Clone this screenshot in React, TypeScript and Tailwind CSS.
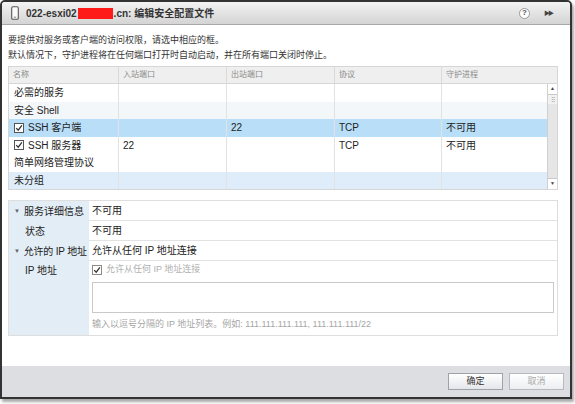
import React from "react";

const FONT = {
  fontFamily: '"Liberation Sans", "Noto Sans CJK SC", sans-serif',
};

type Row = {
  name: string;
  checkbox?: boolean;
  inbound?: string;
  outbound?: string;
  protocol?: string;
  daemon?: string;
  bg: string;
};

const rows: Row[] = [
  { name: "必需的服务", bg: "bg-white" },
  { name: "安全 Shell", bg: "bg-[#f4f7fa]" },
  {
    name: "SSH 客户端",
    checkbox: true,
    outbound: "22",
    protocol: "TCP",
    daemon: "不可用",
    bg: "bg-[#b9def7]",
  },
  {
    name: "SSH 服务器",
    checkbox: true,
    inbound: "22",
    protocol: "TCP",
    daemon: "不可用",
    bg: "bg-white",
  },
  { name: "简单网络管理协议", bg: "bg-white" },
  { name: "未分组", bg: "bg-[#deedf9]" },
];

function CheckBox({ faded }: { faded?: boolean }) {
  return (
    <span
      className={`inline-flex h-[10px] w-[10px] shrink-0 items-center justify-center border bg-white ${
        faded ? "border-[#8a8a8a]" : "border-[#555]"
      }`}
    >
      <svg viewBox="0 0 10 10" className="h-[8px] w-[8px]">
        <path
          d="M1.5 5.2 L4 7.8 L8.6 1.8"
          fill="none"
          stroke="#333"
          strokeWidth="1.6"
        />
      </svg>
    </span>
  );
}

function Caret() {
  return <span className="mr-[4px] text-[6px] text-[#666]">▼</span>;
}

export default function App() {
  return (
    <div
      className="h-[404px] w-[575px] overflow-hidden bg-white text-[9px] text-[#222]"
      style={FONT}
    >
      <div className="flex h-[399px] w-[572px] flex-col overflow-hidden rounded-t-[5px] border-2 border-[#333] bg-white shadow-[2px_3px_3px_rgba(0,0,0,0.35)]">
        {/* title bar */}
        <div className="flex h-[23px] shrink-0 items-center border-b border-[#a8a8a8] bg-gradient-to-b from-[#f3f3f3] to-[#d4d4d4] pl-[9px] pr-[18px]">
          <svg viewBox="0 0 8 14" className="h-[14px] w-[8px]">
            <rect x="0.7" y="0.7" width="6.6" height="12.6" rx="1.3" fill="#fafafa" stroke="#555" strokeWidth="1.1" />
            <line x1="2.8" y1="11.2" x2="5.2" y2="11.2" stroke="#777" strokeWidth="0.9" />
          </svg>
          <span className="ml-[7px] flex items-center text-[10px] font-bold text-[#333]">
            022-esxi02
            <span className="mx-[1px] inline-block h-[11px] w-[35px] bg-[#ff1a1a]" />
            .cn: 编辑安全配置文件
          </span>
          <div className="ml-auto flex items-center gap-[14px]">
            <span className="flex h-[11px] w-[11px] items-center justify-center rounded-full border border-[#999] bg-white text-[8px] font-bold text-[#555]">
              ?
            </span>
            <span className="text-[6px] tracking-[-2px] text-[#444]">▶▶</span>
          </div>
        </div>

        {/* body */}
        <div className="flex flex-1 flex-col pl-[6px] pr-[12px] pt-[8px]">
          <p className="leading-[15px] text-[#333]">
            要提供对服务或客户端的访问权限，请选中相应的框。
          </p>
          <p className="leading-[15px] text-[#333]">
            默认情况下，守护进程将在任何端口打开时自动启动，并在所有端口关闭时停止。
          </p>

          {/* table */}
          <div className="mt-[3px] border border-[#d6d6d6]">
            <div className="grid h-[17px] grid-cols-[109px_108px_108px_107px_1fr] border-b border-[#d6d6d6] bg-[#efefef] text-[8px] text-[#8a8a8a]">
              {["名称", "入站端口", "出站端口", "协议", "守护进程"].map((h, i) => (
                <div
                  key={h}
                  className={`flex items-center pl-[4px] ${i > 0 ? "border-l border-[#dadada]" : ""}`}
                >
                  {h}
                </div>
              ))}
            </div>
            <div className="flex">
              <div className="flex-1">
                {rows.map((r) => (
                  <div
                    key={r.name}
                    className={`grid h-[17.5px] grid-cols-[109px_108px_108px_107px_1fr] text-[10px] ${r.bg}`}
                  >
                    <div className="flex items-center gap-[4px] pl-[5px]">
                      {r.checkbox ? <CheckBox /> : null}
                      {r.name}
                    </div>
                    <div className="flex items-center border-l border-[#e2e2e2] pl-[4px]">
                      {r.inbound}
                    </div>
                    <div className="flex items-center border-l border-[#e2e2e2] pl-[4px]">
                      {r.outbound}
                    </div>
                    <div className="flex items-center border-l border-[#e2e2e2] pl-[4px]">
                      {r.protocol}
                    </div>
                    <div className="flex items-center border-l border-[#e2e2e2] pl-[4px]">
                      {r.daemon}
                    </div>
                  </div>
                ))}
              </div>
              {/* scrollbar */}
              <div className="flex w-[10px] flex-col border-l border-[#d0d0d0] bg-[#e6e6e6]">
                <div className="flex h-[11px] items-center justify-center border-b border-[#c8c8c8] bg-white text-[5px] text-[#444]">
                  ▲
                </div>
                <div className="flex h-[9px] items-center justify-center bg-[#f2f2f2] text-[6px] leading-none text-[#888]">
                  ⠿
                </div>
                <div className="flex-1" />
                <div className="flex h-[11px] items-center justify-center border-t border-[#c8c8c8] bg-white text-[5px] text-[#444]">
                  ▼
                </div>
              </div>
            </div>
          </div>

          {/* details */}
          <div className="mt-[10px] grid grid-cols-[80px_1fr] border border-[#dedede] text-[10px]">
            <div className="flex h-[20px] items-center whitespace-nowrap bg-[#e3edf6] pl-[5px]">
              <Caret />
              服务详细信息
            </div>
            <div className="flex h-[20px] items-center border-b border-[#e2e2e2] pl-[3px]">
              不可用
            </div>
            <div className="flex h-[20px] items-center bg-[#e3edf6] pl-[16px]">
              状态
            </div>
            <div className="flex h-[20px] items-center border-b border-[#e2e2e2] pl-[3px]">
              不可用
            </div>
            <div className="flex h-[20px] items-center whitespace-nowrap bg-[#e3edf6] pl-[5px] tracking-[-0.2px]">
              <Caret />
              允许的 IP 地址
            </div>
            <div className="flex h-[20px] items-center border-b border-[#e2e2e2] pl-[3px]">
              允许从任何 IP 地址连接
            </div>
            <div className="bg-[#e3edf6] pl-[16px] pt-[4px] leading-[12px]">IP 地址</div>
            <div className="pb-[5px] pl-[3px] pr-[3px] pt-[3px]">
              <div className="flex h-[12px] items-center gap-[4px] text-[9px] text-[#b0b0b0]">
                <CheckBox faded />
                允许从任何 IP 地址连接
              </div>
              <div className="mt-[6px] h-[31px] border border-[#c9c9c9] bg-white" />
              <p className="mt-[5px] text-[9px] leading-[12px] text-[#a6a6a6]">
                输入以逗号分隔的 IP 地址列表。例如: 111.111.111.111, 111.111.111/22
              </p>
            </div>
          </div>
        </div>

        {/* footer */}
        <div className="flex h-[31px] shrink-0 items-center justify-end gap-[6px] bg-[#dcdee2] pr-[6px]">
          <button className="h-[17px] w-[55px] border border-[#9ea3aa] bg-gradient-to-b from-[#ffffff] to-[#e4e6ea] text-[9px] text-[#333]">
            确定
          </button>
          <button className="h-[17px] w-[55px] border border-[#b6bac0] bg-gradient-to-b from-[#ffffff] to-[#eceef1] text-[9px] text-[#aaa]">
            取消
          </button>
        </div>
      </div>
    </div>
  );
}
